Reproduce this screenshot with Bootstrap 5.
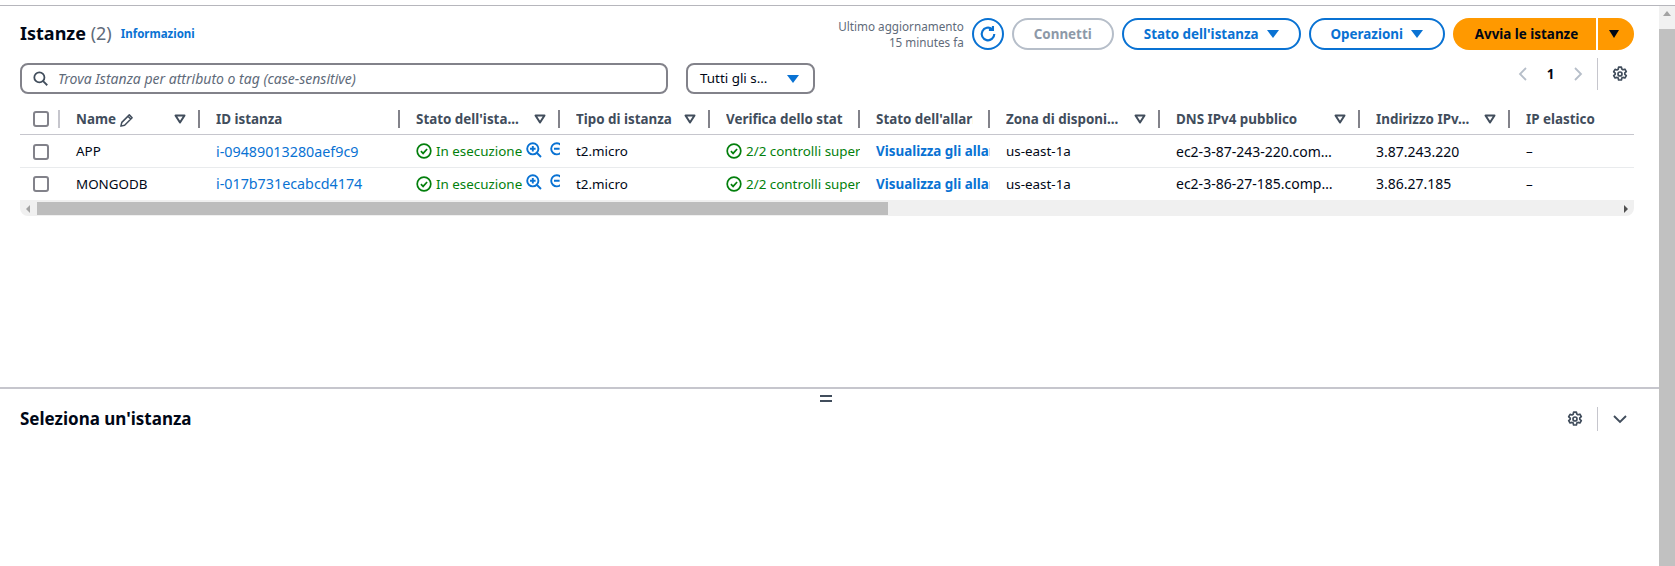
<!DOCTYPE html>
<html lang="it">

<head>
    <meta charset="UTF-8">
    <meta name="viewport" content="width=device-width, initial-scale=1.0">
    <title>Istanze | EC2</title>
    <link href="https://cdn.jsdelivr.net/npm/bootstrap@5.3.3/dist/css/bootstrap.min.css" rel="stylesheet">
    <style>
        html, body {
            height: 566px;
            overflow: hidden;
        }

        body {
            font-family: "Noto Sans", "Open Sans", sans-serif;
            font-size: 13px;
            color: #000716;
            background: #fff;
        }

        .page-shell {
            margin-top: 5px;
            border-top: 1px solid #b6b6bc;
            height: 561px;
        }

        .page-main {
            width: 1659px;
            flex: none;
        }

        .page-scroll {
            width: 16px;
            background: #f1f1f1;
        }

        .scroll-thumb {
            background: #c1c1c1;
        }

        .arrow-up {
            width: 0;
            height: 0;
            margin: 5px auto 5px;
            border-left: 4px solid transparent;
            border-right: 4px solid transparent;
            border-bottom: 5px solid #a3a3a3;
        }

        .top-pane {
            height: 383px;
            padding: 12px 25px 0 20px;
            border-bottom: 2px solid #c6c6cd;
        }

        .pane-title {
            font-size: 18px;
            font-weight: 700;
            margin: 0;
        }

        .pane-count {
            font-weight: 400;
            color: #5f6b7a;
        }

        .info-link {
            font-size: 11.5px;
            font-weight: 700;
            color: #0972d3;
            text-decoration: none;
            margin-left: 9px;
        }

        .updated-text {
            font-size: 11.7px;
            line-height: 16px;
            color: #5f6b7a;
            text-align: right;
            margin-right: 8px;
        }

        .aws-btn {
            height: 32px;
            padding: 0 20px;
            border: 2px solid #0972d3;
            border-radius: 16px;
            color: #0972d3;
            background: #fff;
            font-size: 13.4px;
            font-weight: 700;
            display: inline-flex;
            align-items: center;
            gap: 8px;
            white-space: nowrap;
        }

        .aws-btn:disabled {
            color: #8d99a8;
            border-color: #b6bec9;
            opacity: 1;
            width: 102px;
            justify-content: center;
        }

        .btn-circle {
            width: 32px;
            padding: 0;
            justify-content: center;
        }

        .btn-start {
            background: #f90;
            border: 0;
            color: #000716;
            border-radius: 16px 0 0 16px;
            width: 143px;
            padding: 0 0 0 4px;
            justify-content: center;
        }

        .btn-start-drop {
            background: #f90;
            border: 0;
            border-radius: 0 16px 16px 0;
            width: 36px;
            padding: 0 4px 0 0;
            justify-content: center;
            margin-left: 2px;
        }

        .caret-down {
            width: 0;
            height: 0;
            border-left: 6px solid transparent;
            border-right: 6px solid transparent;
            border-top: 8px solid #0972d3;
        }

        .caret-dark {
            border-left-width: 5px;
            border-right-width: 5px;
            border-top-color: #000716;
        }

        .toolbar-row {
            margin-top: 13px;
        }

        .search-box {
            width: 648px;
            height: 31px;
            border: 2px solid #82828a;
            border-radius: 8px;
            padding-left: 11px;
        }

        .search-box .form-control {
            border: 0;
            padding: 0 0 0 10px;
            font-size: 14px;
            font-style: italic;
            box-shadow: none;
            background: transparent;
        }

        .search-box .form-control::placeholder {
            color: #5f6b7a;
        }

        .state-select {
            width: 129px;
            height: 31px;
            margin-left: 18px;
            border: 2px solid #82828a;
            border-radius: 8px;
            background: #fff;
            padding: 0 14px 0 12px;
            font-size: 13.4px;
            color: #000716;
        }

        .pager {
            margin-top: -5px;
            height: 32px;
            padding-right: 6px;
        }

        .pager-num {
            font-weight: 700;
            font-size: 13.4px;
            width: 37px;
            text-align: center;
        }

        .thin-sep {
            width: 1px;
            background: #c6c6cd;
            align-self: stretch;
            margin: 0 14px;
        }

        .table-wrap {
            margin-top: 11px;
            overflow: hidden;
        }

        .instances {
            table-layout: fixed;
            width: 1720px;
            margin: 0;
            border-collapse: collapse;
        }

        .instances th,
        .instances td {
            padding: 0;
            border: 0;
            font-size: 13.4px;
            white-space: nowrap;
            overflow: hidden;
            color: #000716;
            background: #fff;
            box-shadow: none;
            vertical-align: middle;
        }

        .instances thead tr {
            border-bottom: 1px solid #c6c6cd;
            height: 29px;
        }

        .instances tbody tr {
            height: 33px;
        }

        .instances tbody tr:first-child td {
            padding-top: 2px;
        }

        .instances tbody tr + tr {
            border-top: 1px solid #e9ebed;
        }

        .col-head {
            height: 18px;
            padding: 0 12px 0 16px;
            border-right: 2px solid #82828a;
            display: flex;
            align-items: center;
            justify-content: space-between;
            font-weight: 700;
            color: #414d5c;
            overflow: hidden;
        }

        .col-head.head-first {
            padding: 0 0 0 13px;
            border-right-color: #c6c6cd;
        }

        .col-head.head-clip {
            padding-right: 15px;
        }

        .head-label {
            overflow: hidden;
            white-space: nowrap;
        }

        .cell-body {
            padding-left: 16px;
            overflow: hidden;
        }

        .cell-first {
            padding-left: 13px;
        }

        .cell-ellipsis {
            text-overflow: ellipsis;
            padding-right: 22px;
            font-size: 14px;
        }

        .cell-num {
            font-size: 14px;
        }

        .instances .form-check-input {
            width: 16px;
            height: 16px;
            margin: 0;
            display: block;
            border: 2px solid #82828a;
            border-radius: 3px;
        }

        .row-link {
            color: #0972d3;
            text-decoration: none;
            font-size: 14.3px;
        }

        .row-link-bold {
            font-size: 13.4px;
            font-weight: 700;
        }

        .status-ok {
            color: #037f0c;
        }

        .zoom-ico {
            flex: none;
            margin-bottom: 3px;
        }

        .filter-tri {
            flex: none;
        }

        .h-scroll {
            height: 16px;
            background: #f0f0f0;
            border-radius: 0 0 8px 8px;
            padding: 2px 0 1px 0;
        }

        .h-arrow-left,
        .h-arrow-right {
            width: 0;
            height: 0;
            flex: none;
            border-top: 4px solid transparent;
            border-bottom: 4px solid transparent;
        }

        .h-arrow-left {
            margin: 0 7px 0 6px;
            border-right: 4px solid #a3a3a3;
        }

        .h-arrow-right {
            margin: 0 6px 0 auto;
            border-left: 4px solid #505050;
        }

        .h-thumb {
            width: 851px;
            height: 13px;
            background: #bdbdbd;
        }

        .drag-handle {
            width: 12px;
            height: 7px;
            margin: 6px 0 0 820px;
            border-top: 2px solid #414d5c;
            border-bottom: 2px solid #414d5c;
        }

        .bottom-head {
            padding: 5px 31px 0 20px;
        }

        .bottom-title {
            font-size: 17px;
            font-weight: 700;
            margin: 0;
        }

        .bottom-tools {
            height: 24px;
        }
    </style>
</head>

<body>
    <svg width="0" height="0" class="position-absolute">
        <symbol id="ico-gear" viewBox="0 0 16 16">
            <path d="M6.6 1.2h2.8l.4 1.9 1.2.7 1.9-.6 1.4 2.4-1.5 1.3v1.4l1.5 1.3-1.4 2.4-1.9-.6-1.2.7-.4 1.9H6.6l-.4-1.9-1.2-.7-1.9.6-1.4-2.4 1.5-1.3V7.1L1.7 5.8l1.4-2.4 1.9.6 1.2-.7z" fill="none" stroke="#414d5c" stroke-width="1.7" stroke-linejoin="round"/>
            <circle cx="8" cy="8" r="2" fill="none" stroke="#414d5c" stroke-width="1.7"/>
        </symbol>
        <symbol id="ico-check" viewBox="0 0 16 16">
            <circle cx="8" cy="8" r="6.8" fill="none" stroke="#037f0c" stroke-width="1.7"/>
            <path d="M4.900 8.200l2.200 2.200 4-4.400" fill="none" stroke="#037f0c" stroke-width="1.7"/>
        </symbol>
        <symbol id="ico-zoom-in" viewBox="0 0 16 16">
            <circle cx="6.800" cy="6.800" r="5.600" fill="none" stroke="#0972d3" stroke-width="1.9"/>
            <path d="M11 11l4 4M4 6.800h5.600M6.800 4v5.600" fill="none" stroke="#0972d3" stroke-width="1.9"/>
        </symbol>
        <symbol id="ico-zoom-out" viewBox="0 0 16 16">
            <circle cx="6.800" cy="6.800" r="5.600" fill="none" stroke="#0972d3" stroke-width="1.9"/>
            <path d="M11 11l4 4M4 6.800h5.600" fill="none" stroke="#0972d3" stroke-width="1.9"/>
        </symbol>
        <symbol id="ico-filter" viewBox="0 0 12 10">
            <path d="M1.500 1.500h9L6 8.500z" fill="none" stroke="#414d5c" stroke-width="2" stroke-linejoin="round"/>
        </symbol>
    </svg>

    <div class="page-shell d-flex">
        <div class="page-main">
            <section class="top-pane">
                <div class="d-flex align-items-center">
                    <h1 class="pane-title">Istanze <span class="pane-count">(2)</span></h1>
                    <a href="#" class="info-link">Informazioni</a>
                    <div class="ms-auto d-flex align-items-center">
                        <div class="updated-text">Ultimo aggiornamento<br>15 minutes fa</div>
                        <button class="aws-btn btn-circle" aria-label="Aggiorna">
                            <svg width="18" height="18" viewBox="0 0 16 16">
                                <path d="M13.6 8a5.6 5.6 0 1 1-2-4.3" fill="none" stroke="#0972d3" stroke-width="1.9"/>
                                <path d="M12.4 0.8v3.6H8.8" fill="none" stroke="#0972d3" stroke-width="1.9"/>
                            </svg>
                        </button>
                        <button class="aws-btn ms-2" disabled>Connetti</button>
                        <button class="aws-btn ms-2">Stato dell'istanza <span class="caret-down"></span></button>
                        <button class="aws-btn ms-2">Operazioni <span class="caret-down"></span></button>
                        <button class="aws-btn btn-start ms-2">Avvia le istanze</button>
                        <button class="aws-btn btn-start-drop" aria-label="Altre opzioni"><span class="caret-down caret-dark"></span></button>
                    </div>
                </div>

                <div class="d-flex align-items-start toolbar-row">
                    <div class="search-box d-flex align-items-center">
                        <svg width="15" height="15" viewBox="0 0 16 16" class="flex-shrink-0">
                            <circle cx="6.8" cy="6.8" r="5.4" fill="none" stroke="#414d5c" stroke-width="1.9"/>
                            <path d="M10.8 10.8l4.4 4.4" stroke="#414d5c" stroke-width="1.9"/>
                        </svg>
                        <input class="form-control" type="text" placeholder="Trova Istanza per attributo o tag (case-sensitive)">
                    </div>
                    <button class="state-select d-flex align-items-center justify-content-between">
                        <span>Tutti gli s...</span><span class="caret-down"></span>
                    </button>
                    <div class="pager ms-auto d-flex align-items-center">
                        <svg width="10" height="16" viewBox="0 0 10 16"><path d="M8 2L2 8l6 6" fill="none" stroke="#b6bec9" stroke-width="1.8"/></svg>
                        <span class="pager-num mx-1">1</span>
                        <svg width="10" height="16" viewBox="0 0 10 16"><path d="M2 2l6 6-6 6" fill="none" stroke="#b6bec9" stroke-width="1.8"/></svg>
                        <span class="thin-sep"></span>
                        <svg width="16" height="16"><use href="#ico-gear"/></svg>
                    </div>
                </div>

                <div class="table-wrap">
                    <table class="table instances">
                        <colgroup>
                            <col style="width:40px"><col style="width:140px"><col style="width:200px"><col style="width:160px"><col style="width:150px"><col style="width:150px"><col style="width:130px"><col style="width:170px"><col style="width:200px"><col style="width:150px"><col style="width:230px">
                        </colgroup>
                        <thead>
                            <tr>
                                <th><div class="col-head head-first"><input class="form-check-input" type="checkbox" aria-label="Seleziona tutto"></div></th>
                                <th><div class="col-head"><span class="head-label">Name
                                    <svg width="15" height="15" viewBox="0 0 16 16"><path d="M2 14l1-4 8-8 3 3-8 8zM9.500 3.500l3 3" fill="none" stroke="#414d5c" stroke-width="1.600" stroke-linejoin="round"/></svg></span>
                                    <svg class="filter-tri" width="12" height="10"><use href="#ico-filter"/></svg></div></th>
                                <th><div class="col-head"><span class="head-label">ID istanza</span></div></th>
                                <th><div class="col-head"><span class="head-label">Stato dell'ista...</span><svg class="filter-tri" width="12" height="10"><use href="#ico-filter"/></svg></div></th>
                                <th><div class="col-head"><span class="head-label">Tipo di istanza</span><svg class="filter-tri" width="12" height="10"><use href="#ico-filter"/></svg></div></th>
                                <th><div class="col-head head-clip"><span class="head-label">Verifica dello stato</span></div></th>
                                <th><div class="col-head head-clip"><span class="head-label">Stato dell'allarme</span></div></th>
                                <th><div class="col-head"><span class="head-label">Zona di disponi...</span><svg class="filter-tri" width="12" height="10"><use href="#ico-filter"/></svg></div></th>
                                <th><div class="col-head"><span class="head-label">DNS IPv4 pubblico</span><svg class="filter-tri" width="12" height="10"><use href="#ico-filter"/></svg></div></th>
                                <th><div class="col-head"><span class="head-label">Indirizzo IPv...</span><svg class="filter-tri" width="12" height="10"><use href="#ico-filter"/></svg></div></th>
                                <th><div class="col-head"><span class="head-label">IP elastico</span></div></th>
                            </tr>
                        </thead>
                        <tbody>
                            <tr>
                                <td><div class="cell-first"><input class="form-check-input" type="checkbox" aria-label="Seleziona APP"></div></td>
                                <td><div class="cell-body">APP</div></td>
                                <td><div class="cell-body"><a href="#" class="row-link">i-09489013280aef9c9</a></div></td>
                                <td><div class="cell-body d-flex align-items-center status-ok">
                                    <svg class="me-1 flex-shrink-0" width="16" height="16"><use href="#ico-check"/></svg>In esecuzione
                                    <svg class="zoom-ico ms-1" width="16" height="16"><use href="#ico-zoom-in"/></svg>
                                    <svg class="zoom-ico ms-2" width="16" height="16"><use href="#ico-zoom-out"/></svg></div></td>
                                <td><div class="cell-body">t2.micro</div></td>
                                <td><div class="cell-body d-flex align-items-center status-ok">
                                    <svg class="me-1 flex-shrink-0" width="16" height="16"><use href="#ico-check"/></svg>2/2 controlli superati</div></td>
                                <td><div class="cell-body"><a href="#" class="row-link row-link-bold">Visualizza gli allarmi</a></div></td>
                                <td><div class="cell-body">us-east-1a</div></td>
                                <td><div class="cell-body cell-ellipsis">ec2-3-87-243-220.compute-1.amazonaws.com</div></td>
                                <td><div class="cell-body cell-num">3.87.243.220</div></td>
                                <td><div class="cell-body">–</div></td>
                            </tr>
                            <tr>
                                <td><div class="cell-first"><input class="form-check-input" type="checkbox" aria-label="Seleziona MONGODB"></div></td>
                                <td><div class="cell-body">MONGODB</div></td>
                                <td><div class="cell-body"><a href="#" class="row-link">i-017b731ecabcd4174</a></div></td>
                                <td><div class="cell-body d-flex align-items-center status-ok">
                                    <svg class="me-1 flex-shrink-0" width="16" height="16"><use href="#ico-check"/></svg>In esecuzione
                                    <svg class="zoom-ico ms-1" width="16" height="16"><use href="#ico-zoom-in"/></svg>
                                    <svg class="zoom-ico ms-2" width="16" height="16"><use href="#ico-zoom-out"/></svg></div></td>
                                <td><div class="cell-body">t2.micro</div></td>
                                <td><div class="cell-body d-flex align-items-center status-ok">
                                    <svg class="me-1 flex-shrink-0" width="16" height="16"><use href="#ico-check"/></svg>2/2 controlli superati</div></td>
                                <td><div class="cell-body"><a href="#" class="row-link row-link-bold">Visualizza gli allarmi</a></div></td>
                                <td><div class="cell-body">us-east-1a</div></td>
                                <td><div class="cell-body cell-ellipsis">ec2-3-86-27-185.compute-1.amazonaws.com</div></td>
                                <td><div class="cell-body cell-num">3.86.27.185</div></td>
                                <td><div class="cell-body">–</div></td>
                            </tr>
                        </tbody>
                    </table>
                </div>
                <div class="h-scroll d-flex align-items-center">
                    <span class="h-arrow-left"></span>
                    <div class="h-thumb"></div>
                    <span class="h-arrow-right"></span>
                </div>
            </section>

            <section>
                <div class="drag-handle"></div>
                <div class="bottom-head d-flex align-items-center">
                    <h2 class="bottom-title">Seleziona un'istanza</h2>
                    <div class="bottom-tools ms-auto d-flex align-items-center">
                        <svg width="16" height="16"><use href="#ico-gear"/></svg>
                        <span class="thin-sep"></span>
                        <svg width="16" height="16" viewBox="0 0 16 16"><path d="M2 5l6 6 6-6" fill="none" stroke="#414d5c" stroke-width="1.9"/></svg>
                    </div>
                </div>
            </section>
        </div>
        <div class="page-scroll d-flex flex-column">
            <span class="arrow-up"></span>
            <div class="scroll-thumb flex-grow-1 mt-2"></div>
        </div>
    </div>

    <script src="https://cdn.jsdelivr.net/npm/bootstrap@5.3.3/dist/js/bootstrap.bundle.min.js"></script>
</body>

</html>
